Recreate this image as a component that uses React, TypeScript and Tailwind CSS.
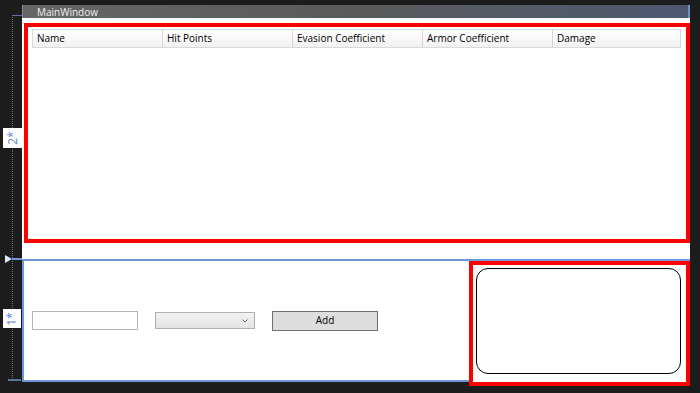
import React from 'react';

const columns = ['Name', 'Hit Points', 'Evasion Coefficient', 'Armor Coefficient', 'Damage'];

const Ruler: React.FC = () => (
    <div className="relative w-[22px] h-full shrink-0">
        {/* dotted guide */}
        <div className="absolute left-[12px] top-[15px] h-[365px] border-l border-dotted border-[#60759c]" />
        <div className="absolute left-[12px] top-[15px] w-[10px] border-t border-[#60759c]" />
        <div className="absolute left-[8px] top-[379px] w-[13px] border-t-2 border-[#60759c]" />

        {/* row markers */}
        <div className="absolute left-[3px] top-[128px] w-[19px] h-[20px] bg-white flex items-center justify-center">
            <span className="-rotate-90 text-[12px] leading-none text-[#5b86d1]">2*</span>
        </div>
        <div className="absolute left-[3px] top-[309px] w-[18px] h-[19px] bg-white flex items-center justify-center">
            <span className="-rotate-90 text-[12px] leading-none text-[#5b86d1]">1*</span>
        </div>
        <div className="absolute left-[12px] top-[258px] w-[10px] border-t-2 border-[#6f96d8]" />
        <div className="absolute left-[5px] top-[255px] w-0 h-0 border-y-[4px] border-y-transparent border-l-[7px] border-l-[#dce7fa]" />
    </div>
);

const ListHeader: React.FC = () => (
    <div className="flex h-[19px] border border-[#d9d9d9] bg-gradient-to-b from-white to-[#f1f1f1] text-[10px] text-black">
        {columns.map((c, i) => (
            <div
                key={c}
                className={`flex items-center pl-[4px] ${i < columns.length - 1 ? 'w-[130px] border-r border-[#d5d5d5]' : 'flex-1'}`}
            >
                {c}
            </div>
        ))}
    </div>
);

export default function App() {
    return (
        <div className="w-[700px] h-[393px] bg-[#1c1c1d] flex overflow-hidden font-['Open_Sans',sans-serif]">
            <Ruler />

            <div className="w-[668px] mt-[5px] h-[377px] flex flex-col">
                {/* title bar */}
                <div className="h-[13px] flex items-center pl-[14px] bg-gradient-to-r from-[#666666] via-[#5a5a5a] to-[#4d5870] border-l border-[#8a8a8a] border-r-2 border-r-[#6f8fcf]">
                    <span className="text-[10px] leading-none text-[#f2f2f2]">MainWindow</span>
                </div>

                <div className="flex-1 bg-white flex flex-col">
                    {/* row 2* */}
                    <div className="h-[241px] pt-[5px] pb-[16px] pl-[2px] flex">
                        <div className="flex-1 border-4 border-[#ff0000] pt-[2px] pl-[4px] pr-[5px]">
                            <ListHeader />
                        </div>
                    </div>

                    {/* row 1* */}
                    <div className="flex-1 flex border-t-2 border-[#6f96d8]">
                        <div className="w-[447px] border-l-2 border-b-2 border-[#6f96d8] flex items-center pl-[8px] gap-[17px]">
                            <div className="w-[106px] h-[19px] border border-[#b4b4b4] bg-white" />
                            <div className="w-[100px] h-[17px] border border-[#b0b0b0] bg-gradient-to-b from-[#f2f2f2] to-[#e4e4e4] flex items-center justify-end pr-[6px]">
                                <svg width="6" height="4" viewBox="0 0 6 4">
                                    <path d="M0.5 0.5 L3 3 L5.5 0.5" fill="none" stroke="#6a6a6a" strokeWidth="1" />
                                </svg>
                            </div>
                            <button className="w-[106px] h-[20px] border border-[#707070] bg-[#dddddd] text-[10px] text-black flex items-center justify-center">
                                Add
                            </button>
                        </div>
                        <div className="flex-1 border-4 border-[#ff0000] mb-[-4px] pt-[3px] pl-[3px] pr-[5px] pb-[8px] bg-white">
                            <div className="h-full border-[1.5px] border-black rounded-[12px]" />
                        </div>
                    </div>
                </div>
            </div>
        </div>
    );
}
